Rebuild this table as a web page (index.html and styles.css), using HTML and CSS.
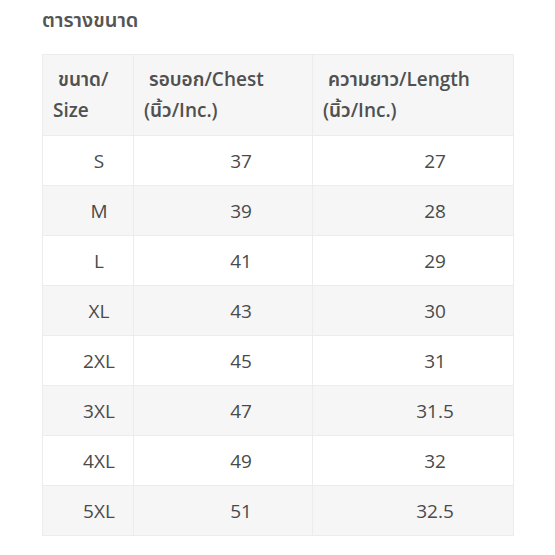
FILE: index.html
```html
<!DOCTYPE html>
<html lang="th">
<head>
<meta charset="utf-8">
<link rel="stylesheet" href="styles.css">
</head>
<body>
<div class="page">
  <div class="title">ตารางขนาด</div>
  <table class="size-table">
    <colgroup>
      <col class="c1"><col class="c2"><col class="c3">
    </colgroup>
    <thead>
      <tr>
        <th><span class="lead">ขนาด/</span><br>Size</th>
        <th><span class="lead">รอบอก/Chest</span><br>(นิ้ว/Inc.)</th>
        <th><span class="lead">ความยาว/Length</span><br>(นิ้ว/Inc.)</th>
      </tr>
    </thead>
    <tbody>
      <tr><td class="s">S</td><td class="ch">37</td><td class="ln">27</td></tr>
      <tr><td class="s">M</td><td class="ch">39</td><td class="ln">28</td></tr>
      <tr><td class="s">L</td><td class="ch">41</td><td class="ln">29</td></tr>
      <tr><td class="s">XL</td><td class="ch">43</td><td class="ln">30</td></tr>
      <tr><td class="s">2XL</td><td class="ch">45</td><td class="ln">31</td></tr>
      <tr><td class="s">3XL</td><td class="ch">47</td><td class="ln">31.5</td></tr>
      <tr><td class="s">4XL</td><td class="ch">49</td><td class="ln">32</td></tr>
      <tr><td class="s">5XL</td><td class="ch">51</td><td class="ln">32.5</td></tr>
    </tbody>
  </table>
</div>
</body>
</html>
```

FILE: styles.css
```css
html, body {
  margin: 0;
  padding: 0;
  background: #ffffff;
}
body {
  font-family: "Open Sans", "Noto Sans Thai", "Noto Sans", "DejaVu Sans", sans-serif;
  color: #4a4a4a;
}
.page {
  padding: 6px 0 0 42px;
}
.title {
  font-size: 20px;
  line-height: 28px;
  font-weight: 600;
  color: #555555;
  height: 48px;
}
.size-table {
  border-collapse: collapse;
  table-layout: fixed;
  width: 471px;
  font-size: 19px;
}
.c1 { width: 91px; }
.c2 { width: 179px; }
.c3 { width: 201px; }
.size-table th,
.size-table td {
  border: 1px solid #ececec;
  padding: 0;
}
.size-table th {
  background: #f6f6f6;
  font-weight: 600;
  text-align: left;
  vertical-align: middle;
  height: 80px;
  line-height: 31px;
  padding: 0 0 0 10px;
  color: #505050;
}
.lead {
  padding-left: 5px;
}
.size-table td {
  height: 49px;
  text-align: center;
  vertical-align: middle;
  line-height: 24px;
}
.size-table tbody tr:nth-child(even) td {
  background: #f6f6f6;
}
.size-table td.s { padding-left: 22px; }
.size-table td.ch { padding-left: 36px; }
.size-table td.ln { padding-left: 44px; }
```
